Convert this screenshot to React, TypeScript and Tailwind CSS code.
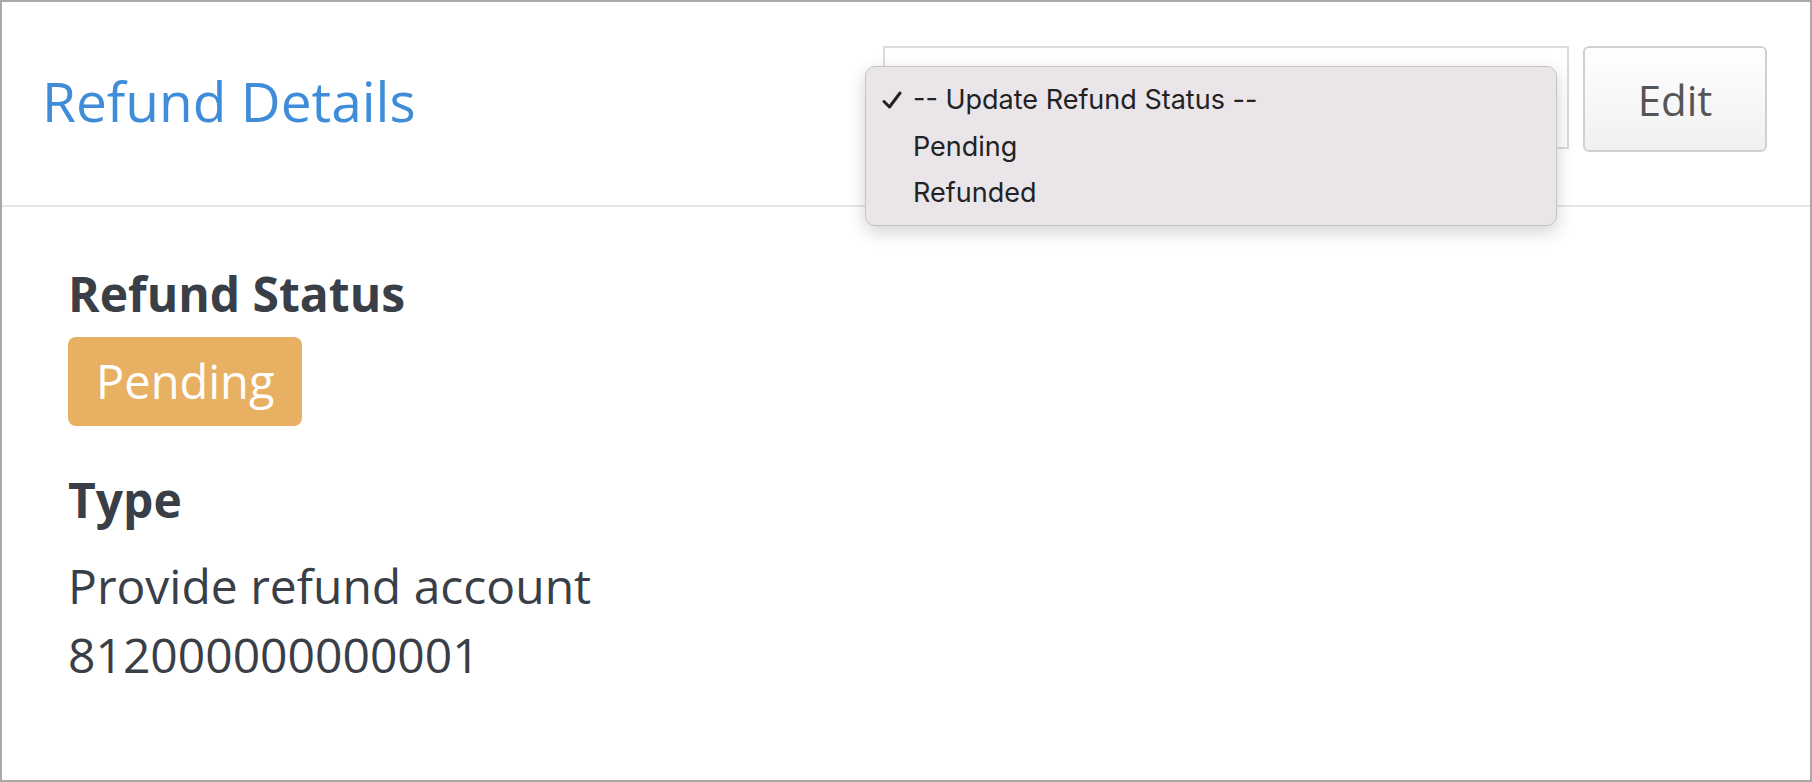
import { useState } from "react";

const options = ["-- Update Refund Status --", "Pending", "Refunded"];

const CheckMark = () => (
  <svg width="20" height="18" viewBox="0 0 20 18" fill="none">
    <path d="M2 10.5 L7.5 16 L18 2" stroke="#222" strokeWidth="3" strokeLinecap="round" strokeLinejoin="round" />
  </svg>
);

const StatusMenu = ({ selected }: { selected: number }) => (
  <div
    className="absolute left-[863px] top-[64px] w-[692px] h-[160px] rounded-[10px] border border-[#c6c3c6] bg-[#e9e5e9] shadow-[0_6px_18px_rgba(0,0,0,0.18)] pt-[10px]"
    style={{ fontFamily: "Inter, 'Liberation Sans', sans-serif" }}
  >
    {options.map((opt, i) => (
      <div key={opt} className="flex items-center h-[46.5px] text-[27px] text-[#222]">
        <span className="w-[47px] flex justify-end pr-[11px]">{i === selected && <CheckMark />}</span>
        <span>{opt}</span>
      </div>
    ))}
  </div>
);

export default function App() {
  const [status] = useState("Pending");

  return (
    <div
      className="relative w-[1812px] h-[782px] border-2 border-[#a9a9a9] bg-white overflow-hidden"
      style={{ fontFamily: "'Open Sans', 'Liberation Sans', sans-serif" }}
    >
      <div className="h-[205px] flex justify-between items-start pl-[40px] pr-[43px] pt-[44px] border-b-2 border-[#e6e6e6]">
        <h3 className="mt-[24px] text-[55px] leading-[62px] text-[#3f8cd8]">Refund Details</h3>
        <div className="flex gap-[14px]">
          <div className="w-[686px] h-[103px] border-2 border-[#dcdcdc] bg-white" />
          <button className="w-[184px] h-[106px] rounded-[6px] border-2 border-[#d0d0d0] bg-gradient-to-b from-white to-[#f0f0f0] text-[42px] text-[#555]">
            Edit
          </button>
        </div>
      </div>

      <div className="pl-[66px] pt-[52px] text-[#393e47]">
        <h4 className="text-[48px] leading-[69px] font-bold">Refund Status</h4>
        <span className="mt-[9px] inline-flex items-center h-[89px] px-[28px] rounded-[8px] bg-[#e8b062] text-white text-[47px]">
          {status}
        </span>
        <h4 className="mt-[39px] text-[48px] leading-[69px] font-bold">Type</h4>
        <div className="mt-[17px] text-[48px] leading-[69px]">
          <p>Provide refund account</p>
          <p>812000000000001</p>
        </div>
      </div>

      <StatusMenu selected={0} />
    </div>
  );
}
